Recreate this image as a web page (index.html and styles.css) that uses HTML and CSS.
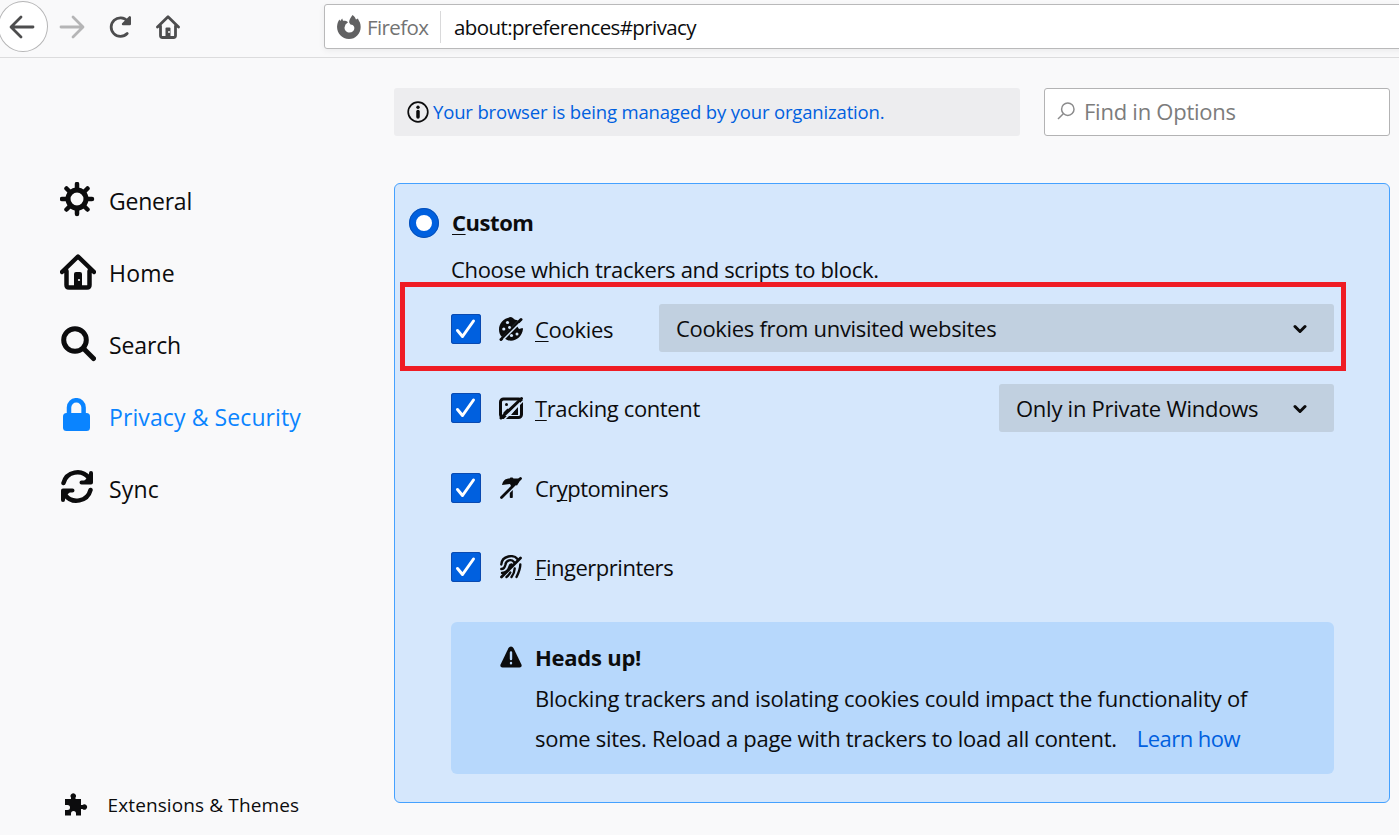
FILE: index.html
```html
<!DOCTYPE html>
<html lang="en">
<head>
<meta charset="utf-8">
<title>Options</title>
<link rel="stylesheet" href="styles.css">
</head>
<body>
<header class="toolbar">
  <div class="back"><svg width="26" height="24" viewBox="0 0 26 24"><path d="M24 12H2.500M12 2L2 12l10 10" class="line-dark"/></svg></div>
  <svg class="forward" width="26" height="24" viewBox="0 0 26 24"><path d="M2 12h21.500M14 2l10 10-10 10" class="line-light"/></svg>
  <svg class="reload" width="24" height="24" viewBox="0 0 24 24"><path d="M18.200 18.500A9.300 9.300 0 1 1 18.500 6" class="line-dark"/><path d="M20.800 2.300v6.800h-6.800z" class="reload-tip"/></svg>
  <svg class="home" width="24" height="24" viewBox="0 0 24 24"><path d="M1.500 12L12 1.800 22.500 12M4.500 11v9.500q0 2 2 2h11q2 0 2-2V11" class="line-dark"/><path d="M9.500 22v-8.500q0-1 1-1h3q1 0 1 1V22z" class="fill-dark"/><circle cx="13" cy="17" r="1" fill="#f9f9fa"/></svg>
  <div class="urlbar">
    <svg class="brand-icon" width="24" height="24" viewBox="0 0 24 24"><path d="M15.500 0C18 1.500 18.500 3.600 19 4.600L21 3.500c.3 1.300 1 2.200 1.800 3.800C26 15.500 20 24 12 24 4.500 24-.5 17.500.1 11 .4 8 1.200 6 2.500 4.400L3.200 6 5.200 3.400 6 5.800C7.500 5.500 9.500 5.800 11 7.200L8.500 9.500l-1 3c0 3.500 2.500 5 4.900 5 3.500 0 5.700-2.800 4.700-5.700-.7-1.500-1.900-2.300-3.600-2.300l-1-1.500C11.300 6 13.500 3 15.500 0z"/></svg>
    <span class="brand">Firefox</span>
    <span class="url">about:preferences#privacy</span>
  </div>
</header>
<div class="page">
  <nav class="sidebar">
    <div class="nav-item"><svg width="36" height="36" viewBox="0 0 36 36"><circle cx="17" cy="17" r="9" class="ink-line w5"/><path d="M17 2v6M17 26v6M2 17h6M26 17h6M6.500 6.500l4 4M23.500 23.500l4 4M6.500 27.500l4-4M23.500 10.500l4-4" class="ink-line w45"/></svg><span class="general">General</span></div>
    <div class="nav-item"><svg width="36" height="36" viewBox="0 0 36 36"><path d="M2 18L18 2.500 34 18M6.500 17v14q0 2.500 2.500 2.500h18q2.500 0 2.500-2.500V17" class="ink-line w45"/><path d="M14 33V20q0-2 2-2h4q2 0 2 2v13z" class="ink"/><circle cx="19" cy="26" r="1.100" fill="#f9f9fa"/></svg><span class="home-label">Home</span></div>
    <div class="nav-item"><svg width="36" height="36" viewBox="0 0 36 36"><circle cx="15" cy="14" r="11.300" class="ink-line w5"/><path d="M23.500 22.500L33.500 32.500" class="ink-line w5"/></svg><span class="search-label">Search</span></div>
    <div class="nav-item active"><svg width="36" height="36" viewBox="0 0 36 36"><path d="M9 18V9.500a7.300 7.300 0 0 1 14.600 0V18" class="lock-line"/><rect x="3" y="15" width="27" height="18" rx="3.500" class="lock-body"/></svg><span class="privacy">Privacy &amp; Security</span></div>
    <div class="nav-item"><svg width="36" height="36" viewBox="0 0 36 36"><path d="M3.500 13C6.500 1.500 21.500-1.500 29 8M30.500 20C27.500 31.500 12.500 34.500 5 25" class="ink-line w45"/><path d="M31 3v9.500h-9.500M3 30v-9.500h9.500" class="ink-line w4"/><path d="M31 4v8h-8zM3 29v-8h8z" class="ink"/></svg><span>Sync</span></div>
    <div class="extensions"><svg width="24" height="24" viewBox="0 0 24 24"><path d="M1 6h6V4.500a2.700 2.700 0 1 1 4.500 0V6h5.500v6h1.500a2.700 2.700 0 1 1 0 4H17v6.500h-5V20.500a2.500 2.500 0 1 0-5 0v2H1V17h2.500a2.500 2.500 0 1 0 0-5H1z" class="ink"/></svg><span>Extensions &amp; Themes</span></div>
  </nav>
  <main class="content">
    <div class="topline">
      <div class="notice"><svg width="22" height="22" viewBox="0 0 22 22"><circle cx="11" cy="11" r="9.800" class="ink-line w17"/><circle cx="11" cy="6.300" r="1.700" class="ink"/><path d="M11 10.500v5.500" class="ink-line w35"/></svg><a>Your browser is being managed by your organization.</a></div>
      <div class="search"><svg width="18" height="18" viewBox="0 0 18 18"><circle cx="10.800" cy="7.200" r="6.200"/><path d="M6.300 11.700L1 17"/></svg><span>Find in Options</span></div>
    </div>
    <section class="panel">
      <div class="radio-row"><span class="radio"></span><b><u>C</u>ustom</b></div>
      <p class="intro">Choose which trackers and scripts to block.</p>
      <div class="option first">
        <span class="check"><svg width="30" height="30" viewBox="0 0 30 30"><path d="M6.500 16.500l5 6L22.500 7"/></svg></span>
        <svg class="kind" width="24" height="24" viewBox="0 0 24 24"><path d="M12 0C5 1 0 6 0 12.500c0 3 1 5.500 3 7.500L19 3.500C17 2.500 15 3 14 1zM23.500 11l-3.500 1-2-3L5.500 21.500C13 27 23 21.500 24 12z" class="ink"/><path d="M2 22.500L22 2.500" class="ink-line w3"/><g fill="#d5e7fc"><circle cx="8.500" cy="5.500" r="1.600"/><circle cx="4.800" cy="12" r="1.600"/><circle cx="10.500" cy="10.500" r="1.400"/><circle cx="12.500" cy="18.500" r="1.600"/><circle cx="18" cy="17" r="1.500"/></g><path d="M4.500 22.500L20.500 6.500" class="gap-line"/></svg>
        <span class="name cookies"><u>C</u>ookies</span>
        <div class="select wide"><span>Cookies from unvisited websites</span><svg width="14" height="10" viewBox="0 0 14 10"><path d="M2 2.500l5 5 5-5"/></svg></div>
      </div>
      <div class="option">
        <span class="check"><svg width="30" height="30" viewBox="0 0 30 30"><path d="M6.500 16.500l5 6L22.500 7"/></svg></span>
        <svg class="kind" width="24" height="24" viewBox="0 0 24 24"><rect x="1.500" y="3" width="21" height="18.500" rx="3" class="ink-line w3"/><path d="M4.500 19.500v-3l4-4 2 2zM12 19l7-8.500V19z" class="ink"/><circle cx="7.500" cy="8.500" r="1.500" class="ink"/><path d="M4.800 24L24 5" class="gap-line"/><path d="M2 22L22.500 2.500" class="ink-line w3"/></svg>
        <span class="name tracking"><u>T</u>racking content</span>
        <div class="select narrow"><span>Only in Private Windows</span><svg width="14" height="10" viewBox="0 0 14 10"><path d="M2 2.500l5 5 5-5"/></svg></div>
      </div>
      <div class="option third">
        <span class="check"><svg width="30" height="30" viewBox="0 0 30 30"><path d="M6.500 16.500l5 6L22.500 7"/></svg></span>
        <svg class="kind" width="24" height="24" viewBox="0 0 24 24"><path d="M3 9C4 4.500 6.500 2.500 10.500 2.500l1-1h2l1 1h6L12.500 11 11 8z" class="ink"/><path d="M2.500 21.500L21.500 2.500" class="ink-line w28"/><path d="M20.500 5.500l-2.500 4-3.500-1zM10.800 17l3-3v7.500q-1.500 1-3 0z" class="ink"/></svg>
        <span class="name crypto">Cr<u>y</u>ptominers</span>
      </div>
      <div class="option last">
        <span class="check"><svg width="30" height="30" viewBox="0 0 30 30"><path d="M6.500 16.500l5 6L22.500 7"/></svg></span>
        <svg class="kind" width="24" height="24" viewBox="0 0 24 24"><path d="M2.300 9.500C3 0 15-.5 18.500 4M2.300 14c3 0 3.500-1.500 4-4C7 4.500 12.500 4 15 7M3 18c5-.5 6.500-3 7.500-6.500q.5-1.800 2-2M12.500 22c2-2.500 3-5 3.200-8.500M17.500 22c2-4 3.800-8 3.800-12.500M7.500 22c2.200-1.500 3-3 3.800-4.500" class="ink-line w24"/><path d="M2.500 22L21.500 3" class="ink-line w28"/></svg>
        <span class="name finger"><u>F</u>ingerprinters</span>
      </div>
      <div class="warning">
        <svg width="22" height="22" viewBox="0 0 22 22"><path d="M11 .5q1.700 0 2.600 1.700l7.700 16q1.300 3.300-1.800 3.300h-17q-3.100 0-1.800-3.300l7.700-16Q9.300.5 11 .5z" class="ink"/><path d="M11 6.500v6.500M11 17v.2" class="bang"/></svg>
        <div class="warning-text">
          <h2>Heads up!</h2>
          <p class="line-one">Blocking trackers and isolating cookies could impact the functionality of</p>
          <p class="line-two"><span>some sites. Reload a page with trackers to load all content.</span><a>Learn how</a></p>
        </div>
      </div>
      <div class="highlight"></div>
    </section>
  </main>
</div>
</body>
</html>
```
FILE: styles.css
```css
* { box-sizing: border-box; }
body {
  margin: 0;
  width: 1399px;
  height: 835px;
  overflow: hidden;
  background: #f9f9fa;
  color: #0c0c0d;
  font: 22px/30px "Open Sans", "Noto Sans", sans-serif;
}
svg { display: block; flex: none; }
u { text-decoration: underline; text-decoration-thickness: 1px; text-underline-offset: 3px; text-decoration-skip-ink: none; }
p, h2 { margin: 0; white-space: nowrap; }
span, a, b { white-space: nowrap; }

.toolbar { display: flex; align-items: center; height: 58px; padding-bottom: 4px; border-bottom: 1px solid #dcdcdd; overflow: hidden; }
.back { flex: none; display: flex; align-items: center; justify-content: center; width: 50px; height: 51px; margin-left: -2px; border: 1px solid #b5b5b6; border-radius: 50%; background: #fff; padding-right: 2px; }
.forward { margin-left: 11px; }
.reload { margin-left: 24px; }
.home { margin-left: 23px; }
.line-dark, .line-light { fill: none; stroke: #4d4d4e; stroke-width: 2.800; stroke-linecap: round; stroke-linejoin: round; }
.line-light { stroke: #b5b5b6; }
.fill-dark { fill: #4d4d4e; }
.reload-tip { fill: #4d4d4e; stroke: #4d4d4e; stroke-width: 2.400; stroke-linejoin: round; }
.urlbar { flex: none; display: flex; align-items: center; width: 1085px; height: 45px; margin-left: 144px; padding-left: 12px; border: 1px solid #b9b9ba; border-radius: 3px; background: #fff; box-shadow: 0 2px 6px rgba(0,0,0,.06); }
.brand-icon { fill: #616162; }
.brand { width: 74px; height: 32px; margin-left: 6px; padding-top: 1px; border-right: 1px solid #d9d9da; color: #737373; font-size: 20.500px; letter-spacing: -0.600px; }
.url { margin-left: 13px; padding-top: 1px; color: #0c0c0d; font-size: 20.500px; letter-spacing: -0.600px; }

.page { display: flex; height: 777px; }
.sidebar { display: flex; flex-direction: column; gap: 24px; width: 394px; padding: 118px 0 15px 60px; }
.nav-item { display: flex; align-items: center; gap: 13px; height: 48px; font-size: 23px; }
.nav-item span { padding-top: 2px; letter-spacing: 0.180px; }
.nav-item .general { letter-spacing: -0.240px; }
.nav-item .home-label { letter-spacing: 0.200px; }
.nav-item .search-label { letter-spacing: -0.140px; }
.nav-item .privacy { letter-spacing: 0.100px; }
.active { color: #0a84ff; }
.extensions { display: flex; align-items: center; gap: 19.500px; margin: auto 0 0 4px; font-size: 19px; letter-spacing: 0.120px; }
.ink { fill: #0c0c0d; }
.ink-line { fill: none; stroke: #0c0c0d; stroke-linecap: round; stroke-linejoin: round; }
.w5 { stroke-width: 5; }
.w45 { stroke-width: 4.500; }
.w4 { stroke-width: 4; }
.w35 { stroke-width: 3.500; }
.w3 { stroke-width: 3; }
.w28 { stroke-width: 2.800; }
.w24 { stroke-width: 2.400; }
.w17 { stroke-width: 1.700; }
.lock-line { fill: none; stroke: #0a84ff; stroke-width: 4.500; }
.lock-body { fill: #0a84ff; }

.content { width: 996px; padding-top: 30px; }
.topline { display: flex; justify-content: space-between; height: 48px; margin-bottom: 47px; }
.notice { display: flex; align-items: center; gap: 4px; width: 626px; padding-left: 13px; border-radius: 3px; background: #ededef; font-size: 18.500px; letter-spacing: -0.160px; }
.notice a, .warning a { color: #0060df; }
.search { display: flex; align-items: center; gap: 9px; width: 346px; padding: 0 0 2px 12px; border: 1px solid #b3b3b4; border-radius: 3px; background: #fff; color: #7c7c7c; letter-spacing: -0.250px; }
.search circle, .search path { fill: none; stroke: #8b8b8c; stroke-width: 1.500; }

.panel { position: relative; height: 620px; padding: 24px 55px 0 56px; border: 1px solid #45a1ff; border-radius: 6px; background: #d5e7fc; }
.radio-row { display: flex; align-items: center; gap: 13px; height: 30px; margin-left: -42px; }
.radio-row b { padding-bottom: 2px; letter-spacing: -0.450px; }
.radio { width: 30px; height: 30px; border: 7px solid #0060df; border-radius: 50%; background: #fff; outline: 1px solid #0a50b5; outline-offset: -1px; }
.intro { margin: 16px 0 20px; letter-spacing: -0.330px; }
.option { display: flex; align-items: center; height: 48px; margin-bottom: 32px; }
.option.third, .option.last { margin-bottom: 31px; }
.check { width: 30px; height: 30px; border-radius: 3px; background: #0060df; box-shadow: inset 0 0 0 1px #0a4ab0; }
.check path { fill: none; stroke: #fff; stroke-width: 3; stroke-linecap: round; stroke-linejoin: round; }
.first .check, .first .kind { margin-top: 2px; }
.first .name { padding-top: 2px; }
.kind { margin: 0 12px 0 18px; }
.cookies { letter-spacing: -0.300px; }
.tracking { letter-spacing: -0.380px; }
.crypto { letter-spacing: -0.540px; }
.finger { letter-spacing: -0.480px; }
.gap-line { fill: none; stroke: #d5e7fc; stroke-width: 1.500; }
.select { display: flex; align-items: center; justify-content: space-between; height: 48px; margin-left: auto; padding: 0 27px 0 17px; border-radius: 3px; background: #c1d0e0; }
.select path { fill: none; stroke: #0c0c0d; stroke-width: 3; stroke-linecap: round; stroke-linejoin: round; }
.select svg { margin-top: 2px; }
.wide { width: 675px; letter-spacing: -0.320px; }
.narrow { width: 335px; letter-spacing: -0.260px; }
.warning { display: flex; gap: 13px; height: 152px; padding: 24px 0 0 49px; border-radius: 6px; background: #b7d8fc; }
.warning h2 { height: 32px; font-size: 22px; line-height: 22px; letter-spacing: -0.250px; }
.warning p { line-height: 40px; }
.line-one { letter-spacing: -0.250px; }
.line-two { letter-spacing: -0.290px; }
.warning a { margin-left: 20px; letter-spacing: -0.520px; }
.bang { fill: none; stroke: #b7d8fc; stroke-width: 2.400; stroke-linecap: round; }
.highlight { position: absolute; left: 5px; top: 98px; width: 946px; height: 89px; border: 5px solid #ef1c24; }
```
